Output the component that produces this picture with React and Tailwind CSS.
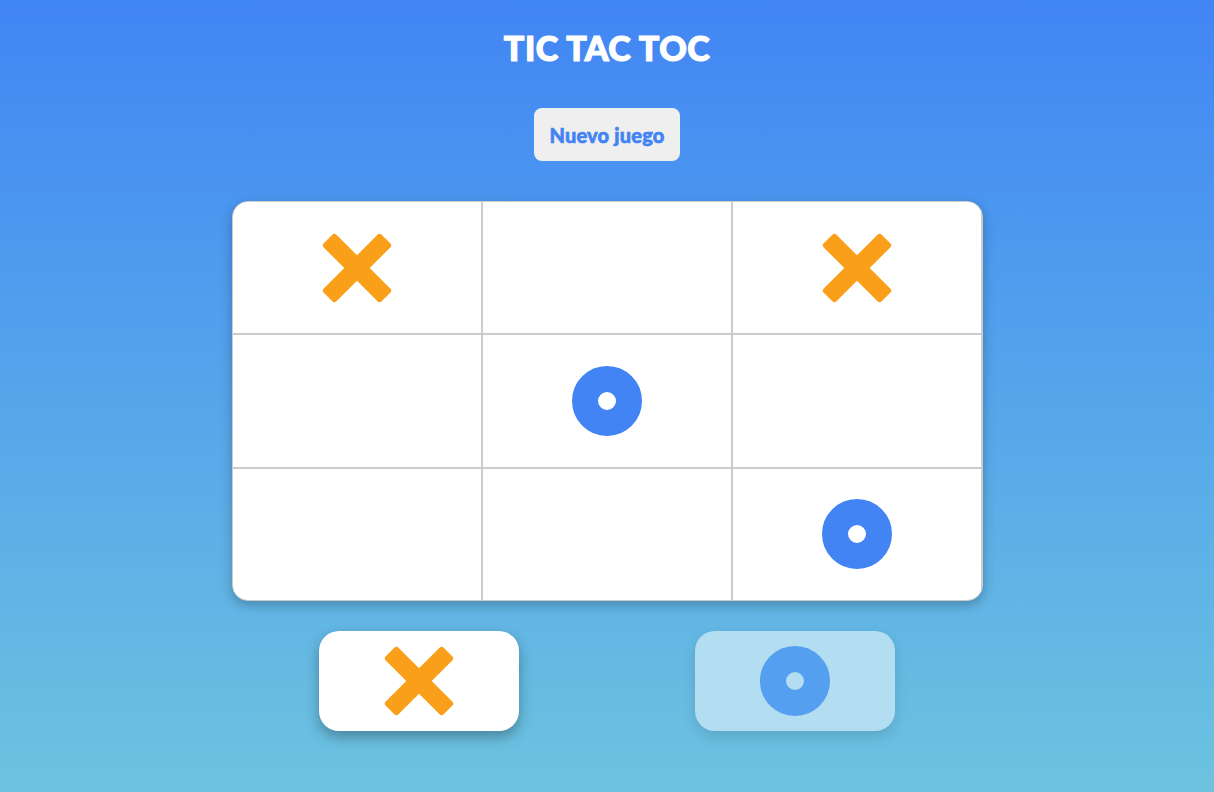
import React from "react";

function XMark({ size = 70 }) {
  return (
    <svg width={size} height={size} viewBox="0 0 70 70">
      <rect x="-6" y="26" width="82" height="18" rx="3" fill="#f99f1a" transform="rotate(45 35 35)" />
      <rect x="-6" y="26" width="82" height="18" rx="3" fill="#f99f1a" transform="rotate(-45 35 35)" />
    </svg>
  );
}

function OMark({ dim = false }) {
  return (
    <div
      className={
        dim
          ? "w-[70px] h-[70px] rounded-full border-[26px] border-[#559ff0] bg-[#b3ddf0]"
          : "w-[70px] h-[70px] rounded-full border-[26px] border-[#4384f5] bg-white"
      }
    />
  );
}

const board = ["x", "", "x", "", "o", "", "", "", "o"];

export default function App() {
  return (
    <div
      className="w-full min-h-[792px] flex flex-col items-center bg-gradient-to-b from-[#4285f4] to-[#6dc3df]"
      style={{ fontFamily: 'Lato, "Open Sans", sans-serif' }}
    >
      <h1 className="mt-[27px] text-[34px] leading-[42px] text-white font-black tracking-[0.5px] [-webkit-text-stroke:1.2px_white]">
        TIC TAC TOC
      </h1>
      <button className="mt-[39px] w-[146px] h-[53px] rounded-lg bg-[#efefef] text-[#4384f5] text-[20px] font-black tracking-[0.2px] [-webkit-text-stroke:0.6px_#4384f5]">
        Nuevo juego
      </button>
      <div className="mt-[40px] w-[751px] h-[400px] rounded-2xl border border-[#ccc] overflow-hidden shadow-[0_4px_12px_rgba(0,0,0,0.25)] bg-[#ccc]">
        <div className="grid grid-cols-3 grid-rows-3 gap-[2px] w-full h-full">
          {board.map((c, i) => (
            <div key={i} className="bg-white flex items-center justify-center">
              {c === "x" && <XMark />}
              {c === "o" && <OMark />}
            </div>
          ))}
        </div>
      </div>
      <div className="mt-[30px] flex gap-[176px]">
        <div className="w-[200px] h-[100px] rounded-[20px] bg-white flex items-center justify-center shadow-[0_6px_14px_rgba(0,0,0,0.3)]">
          <XMark />
        </div>
        <div className="w-[200px] h-[100px] rounded-[20px] bg-[#b3ddf0] flex items-center justify-center shadow-[0_6px_14px_rgba(0,0,0,0.12)]">
          <OMark dim />
        </div>
      </div>
    </div>
  );
}
